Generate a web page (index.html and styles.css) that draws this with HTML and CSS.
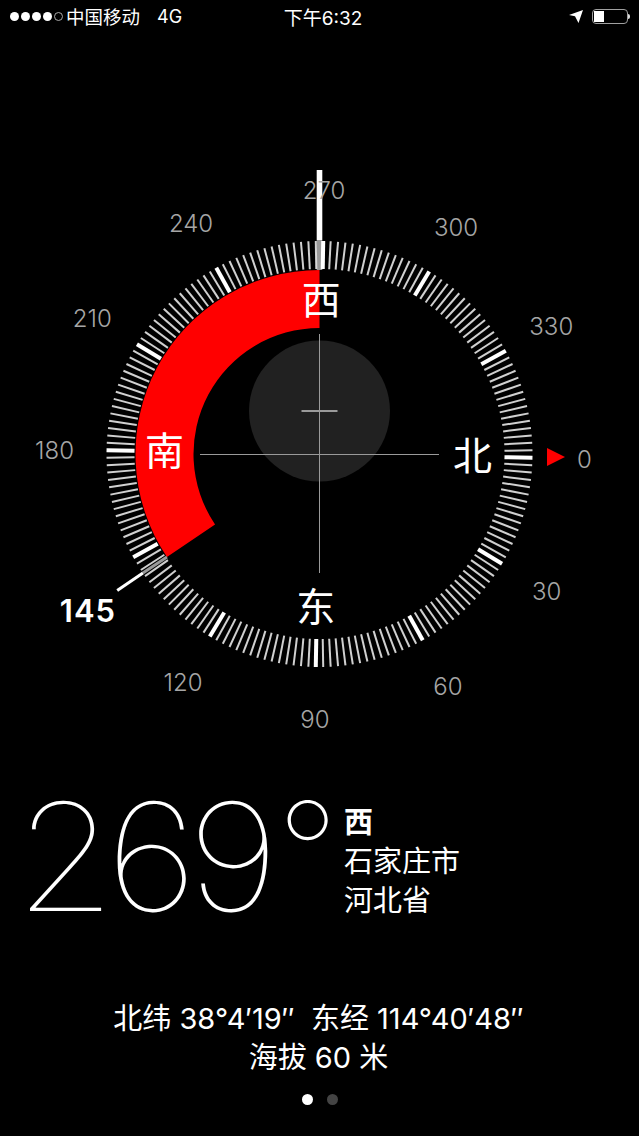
FILE: index.html
```html
<!DOCTYPE html>
<html lang="zh-CN">
<head>
  <meta charset="UTF-8">
  <title>指南针</title>
  <link rel="stylesheet" href="styles.css">
</head>
<body>

<div class="screen">
  <div class="status-bar">
    <div class="status-left">
      <div class="signal">
        <span class="dot"></span><span class="dot"></span><span class="dot"></span><span class="dot"></span><span class="dot empty"></span>
      </div>
      <span class="carrier">中国移动</span>
      <span class="network">4G</span>
    </div>
    <div class="status-time">下午6:32</div>
    <div class="status-right">
      <svg class="arrow" width="14" height="13" viewBox="0 0 14 13"><path d="M14 0 L0 5 L6 6.2 L9.5 13 Z" fill="#fff"/></svg>
      <div class="battery"><div class="battery-level"></div></div>
      <div class="battery-cap"></div>
    </div>
  </div>

  <svg id="dial" class="dial" width="639" height="760" viewBox="0 0 639 760"></svg>

  <div class="reading">
    <div class="degrees">269</div>
    <div class="degree-sign">°</div>
    <div class="place">
      <div class="direction">西</div>
      <div>石家庄市</div>
      <div>河北省</div>
    </div>
  </div>

  <div class="coords">
    <div>北纬 38°4′19″&nbsp;&nbsp;东经 114°40′48″</div>
    <div>海拔 60 米</div>
  </div>

  <div class="pager">
    <span class="page-dot active"></span>
    <span class="page-dot"></span>
  </div>
</div>

<script src="compass.js"></script>

</body>
</html>
```

FILE: styles.css
```css
* {
  box-sizing: border-box;
}
body {
  margin: 0;
  padding: 0;
  background-color: #000;
  color: #fff;
  font-family: Inter, "Noto Sans CJK SC", sans-serif;
}
.screen {
  width: 639px;
  height: 1136px;
  overflow: hidden;
}
.status-bar {
  height: 32px;
  padding: 0 9px 0 10px;
  display: grid;
  grid-template-columns: 1fr auto 1fr;
  align-items: center;
  font-size: 18px;
}
.status-left {
  display: flex;
  align-items: center;
}
.signal {
  display: flex;
  gap: 2px;
  margin-right: 3px;
}
.dot {
  width: 9px;
  height: 9px;
  border-radius: 50%;
  background-color: #fff;
}
.dot.empty {
  background: none;
  border: 1px solid #aaa;
}
.carrier {
  font-size: 18.5px;
}
.network {
  margin-left: 17px;
}
.status-time {
  padding-left: 6px;
  font-size: 19px;
}
.status-right {
  display: flex;
  align-items: center;
  justify-content: flex-end;
}
.arrow {
  margin-right: 9px;
}
.battery {
  width: 36px;
  height: 15px;
  border: 1px solid #a0a0a0;
  border-radius: 4px;
  padding: 1px;
}
.battery-level {
  width: 10px;
  height: 100%;
  background-color: #fff;
}
.battery-cap {
  width: 2px;
  height: 5px;
  background-color: #ddd;
  border-radius: 0 2px 2px 0;
}
.dial {
  display: block;
}
.dial text {
  font-family: Inter, "Noto Sans CJK SC", sans-serif;
  text-anchor: middle;
  dominant-baseline: central;
}
.tick {
  stroke: #d0d0d0;
  stroke-width: 2;
}
.tick.major {
  stroke: #fff;
  stroke-width: 4;
}
.cross {
  stroke: #9a9a9a;
  stroke-width: 1;
}
.cross.small {
  stroke-width: 2;
}
.level {
  fill: #212121;
}
.arc {
  fill: #f00;
}
.pointer {
  fill: #fff;
}
.pointer.over {
  fill-opacity: 0.6;
}
.marker {
  stroke: #fff;
  stroke-width: 3;
}
.marker.over {
  stroke-opacity: 0.6;
}
.label {
  fill: #a6a6a6;
  font-size: 24px;
  font-weight: 300;
}
.cardinal {
  fill: #fff;
  font-size: 39px;
}
.bearing {
  fill: #fff;
  font-size: 31px;
  font-weight: 600;
  letter-spacing: 1px;
}
.reading {
  height: 207px;
  padding-left: 15px;
  display: flex;
  align-items: flex-start;
}
.degrees {
  width: 262px;
  font-size: 150px;
  font-weight: 100;
  line-height: 130px;
  letter-spacing: -9px;
  transform: scaleX(1.08);
  transform-origin: left center;
}
.degree-sign {
  width: 67px;
  font-size: 135px;
  font-weight: 100;
  line-height: 118px;
}
.place {
  padding-top: 11px;
  font-size: 29px;
  line-height: 39px;
}
.direction {
  font-weight: 700;
}
.coords {
  padding-right: 2px;
  text-align: center;
  font-size: 29px;
  line-height: 39px;
}
.pager {
  margin-top: 17px;
  display: flex;
  justify-content: center;
  gap: 14px;
}
.page-dot {
  width: 11px;
  height: 11px;
  border-radius: 50%;
  background-color: #444;
}
.page-dot.active {
  background-color: #fff;
}
```

FILE: compass.js
```js
// dial is drawn in page coordinates, shifted up by the status bar height
const NS = "http://www.w3.org/2000/svg";
const dial = document.getElementById("dial");
const cx = 319.5;
const cy = 422;
const turn = 1; // heading 269: the scale sits 1 degree round from the pointer

function point(angle, r) {
  const a = angle * Math.PI / 180;
  return [cx + r * Math.cos(a), cy + r * Math.sin(a)];
}

function add(tag, attrs, text) {
  const el = document.createElementNS(NS, tag);
  for (const k in attrs) el.setAttribute(k, attrs[k]);
  if (text) el.textContent = text;
  dial.appendChild(el);
  return el;
}

function line(a, b, cls) {
  add("line", { x1: a[0], y1: a[1], x2: b[0], y2: b[1], class: cls });
}

for (let h = 0; h < 360; h += 2) {
  const major = h % 30 === 0;
  line(point(h + turn, 185), point(h + turn, 213), major ? "tick major" : "tick");
}

// red sweep from the pointer back to the 145 marker
const start = 270, end = 146;
const o1 = point(start, 184), o2 = point(end, 184);
const i1 = point(start, 126), i2 = point(end, 126);
add("path", {
  class: "arc",
  d: `M${o1} A184 184 0 0 0 ${o2} L${i2} A126 126 0 0 1 ${i1} Z`
});

add("circle", { class: "level", cx: cx, cy: cy - 43, r: 70.5 });
line([200, cy + 0.5], [439, cy + 0.5], "cross");
line([cx, cy - 120], [cx, cy + 119], "cross");
line([cx - 18, cy - 43], [cx + 18, cy - 43], "cross small");
line([cx, cy - 61], [cx, cy - 26], "cross");

add("rect", { class: "pointer", x: cx - 2.8, y: 138, width: 5.6, height: 70 });
add("rect", { class: "pointer over", x: cx - 2.8, y: 208, width: 5.6, height: 30 });
line(point(146, 213), point(146, 244), "marker");
line(point(146, 184), point(146, 213), "marker over");

for (let h = 0; h < 360; h += 30) {
  if (h === 150) continue; // the 145 bearing label takes this spot
  const p = point(h + turn, 265);
  add("text", { class: "label", x: p[0], y: p[1] + 1 }, String(h));
}

const cardinals = { "北": 0, "东": 90, "南": 180, "西": 270 };
for (const name in cardinals) {
  const p = point(cardinals[name] + turn, 154);
  add("text", { class: "cardinal", x: p[0] - 1, y: p[1] - 1 }, name);
}

add("text", { class: "bearing", x: 88, y: 578 }, "145");
add("path", { d: "M547 416 L565 425 L547 434 Z", fill: "#f00" });
```
